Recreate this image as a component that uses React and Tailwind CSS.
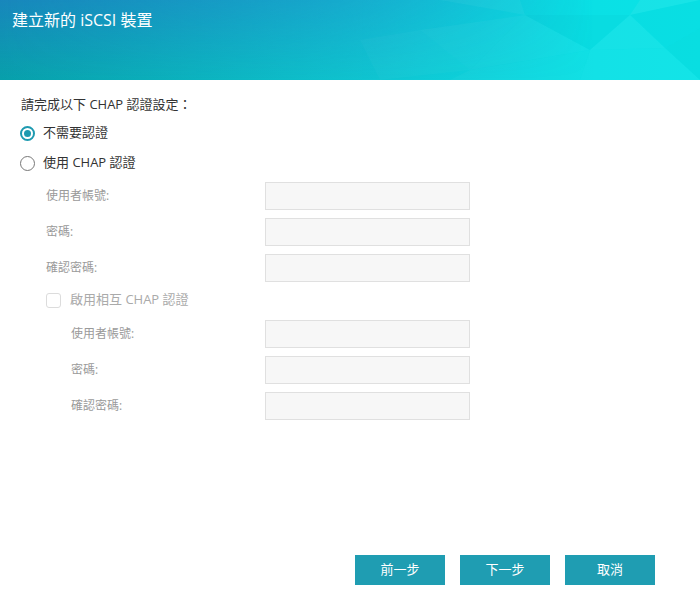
import React from "react";

const font = { fontFamily: '"Open Sans", "Noto Sans CJK TC", sans-serif' };

function Row({ label, labelW }) {
  return (
    <div className="flex items-center h-[28px]">
      <div className={`flex-none text-[12px] text-[#9a9a9a] ${labelW}`}>{label}</div>
      <div className="w-[205px] h-[28px] bg-[#f7f7f7] border border-[#e0e0e0]" />
    </div>
  );
}

function Header() {
  return (
    <div className="relative h-[80px] overflow-hidden bg-[linear-gradient(90deg,#08a0ab_0%,#10c6d2_55%,#0ae0e5_85%,#0ae3e6_100%)]">
      <div className="absolute inset-0 bg-[linear-gradient(180deg,rgba(40,110,205,0.5)_0%,rgba(40,110,205,0.12)_75%,rgba(40,110,205,0)_100%)] [mask-image:linear-gradient(90deg,black_0%,rgba(0,0,0,0.6)_45%,transparent_85%)]" />
      <svg className="absolute inset-0" width="700" height="80" viewBox="0 0 700 80">
        <polygon points="440,0 520,0 525,15" fill="#ffffff" opacity="0.04" />
        <polygon points="420,30 525,15 470,70" fill="#ffffff" opacity="0.035" />
        <polygon points="525,15 630,15 590,50" fill="#006070" opacity="0.03" />
        <polygon points="525,15 470,70 590,50" fill="#ffffff" opacity="0.04" />
        <polygon points="590,50 630,15 665,48" fill="#ffffff" opacity="0.05" />
        <polygon points="630,15 700,0 700,28 665,48" fill="#006070" opacity="0.025" />
        <polygon points="665,48 700,28 700,80" fill="#006070" opacity="0.035" />
        <polygon points="590,50 665,48 700,80 580,80" fill="#ffffff" opacity="0.04" />
        <polygon points="470,70 590,50 580,80 450,80" fill="#ffffff" opacity="0.03" />
        <polygon points="360,40 420,30 470,70 380,80" fill="#ffffff" opacity="0.025" />
        <polygon points="630,15 640,0 700,0" fill="#ffffff" opacity="0.06" />
      </svg>
      <div className="relative pt-[10px] pl-[12px] text-[16px] leading-[20px] text-white" style={font}>
        建立新的 iSCSI 裝置
      </div>
    </div>
  );
}

function Radio({ checked, label }) {
  return (
    <div className="flex items-center h-[30px] pl-[20px]">
      {checked ? (
        <div className="w-[15px] h-[15px] rounded-full border-2 border-[#1e9ab0] flex items-center justify-center">
          <div className="w-[7px] h-[7px] rounded-full bg-[#1e9ab0]" />
        </div>
      ) : (
        <div className="w-[15px] h-[15px] rounded-full border border-[#777]" />
      )}
      <span className="ml-[8px] text-[13px] text-[#333]">{label}</span>
    </div>
  );
}

export default function App() {
  return (
    <div className="w-[700px] h-[600px] bg-white flex flex-col" style={font}>
      <Header />
      <div className="flex flex-col flex-1">
        <div className="mt-[14px] pl-[21px] h-[20px] leading-[20px] text-[13px] text-[#333]">
          請完成以下 CHAP 認證設定：
        </div>
        <div className="mt-[4px]">
          <Radio checked label="不需要認證" />
          <Radio label="使用 CHAP 認證" />
        </div>
        <div className="mt-[4px] pl-[46px] flex flex-col gap-[8px]">
          <Row label="使用者帳號:" labelW="w-[219px]" />
          <Row label="密碼:" labelW="w-[219px]" />
          <Row label="確認密碼:" labelW="w-[219px]" />
        </div>
        <div className="mt-[8px] pl-[46px] flex items-center h-[20px]">
          <div className="w-[15px] h-[15px] rounded-[3px] border border-[#dcdcdc] bg-white" />
          <span className="ml-[9px] text-[13px] text-[#aaa]">啟用相互 CHAP 認證</span>
        </div>
        <div className="mt-[10px] pl-[71px] flex flex-col gap-[8px]">
          <Row label="使用者帳號:" labelW="w-[194px]" />
          <Row label="密碼:" labelW="w-[194px]" />
          <Row label="確認密碼:" labelW="w-[194px]" />
        </div>
        <div className="mt-auto pb-[15px] pr-[45px] flex justify-end gap-[15px]">
          <button className="w-[90px] h-[30px] bg-[#1f9db2] text-white text-[13px]">前一步</button>
          <button className="w-[90px] h-[30px] bg-[#1f9db2] text-white text-[13px]">下一步</button>
          <button className="w-[90px] h-[30px] bg-[#1f9db2] text-white text-[13px]">取消</button>
        </div>
      </div>
    </div>
  );
}
